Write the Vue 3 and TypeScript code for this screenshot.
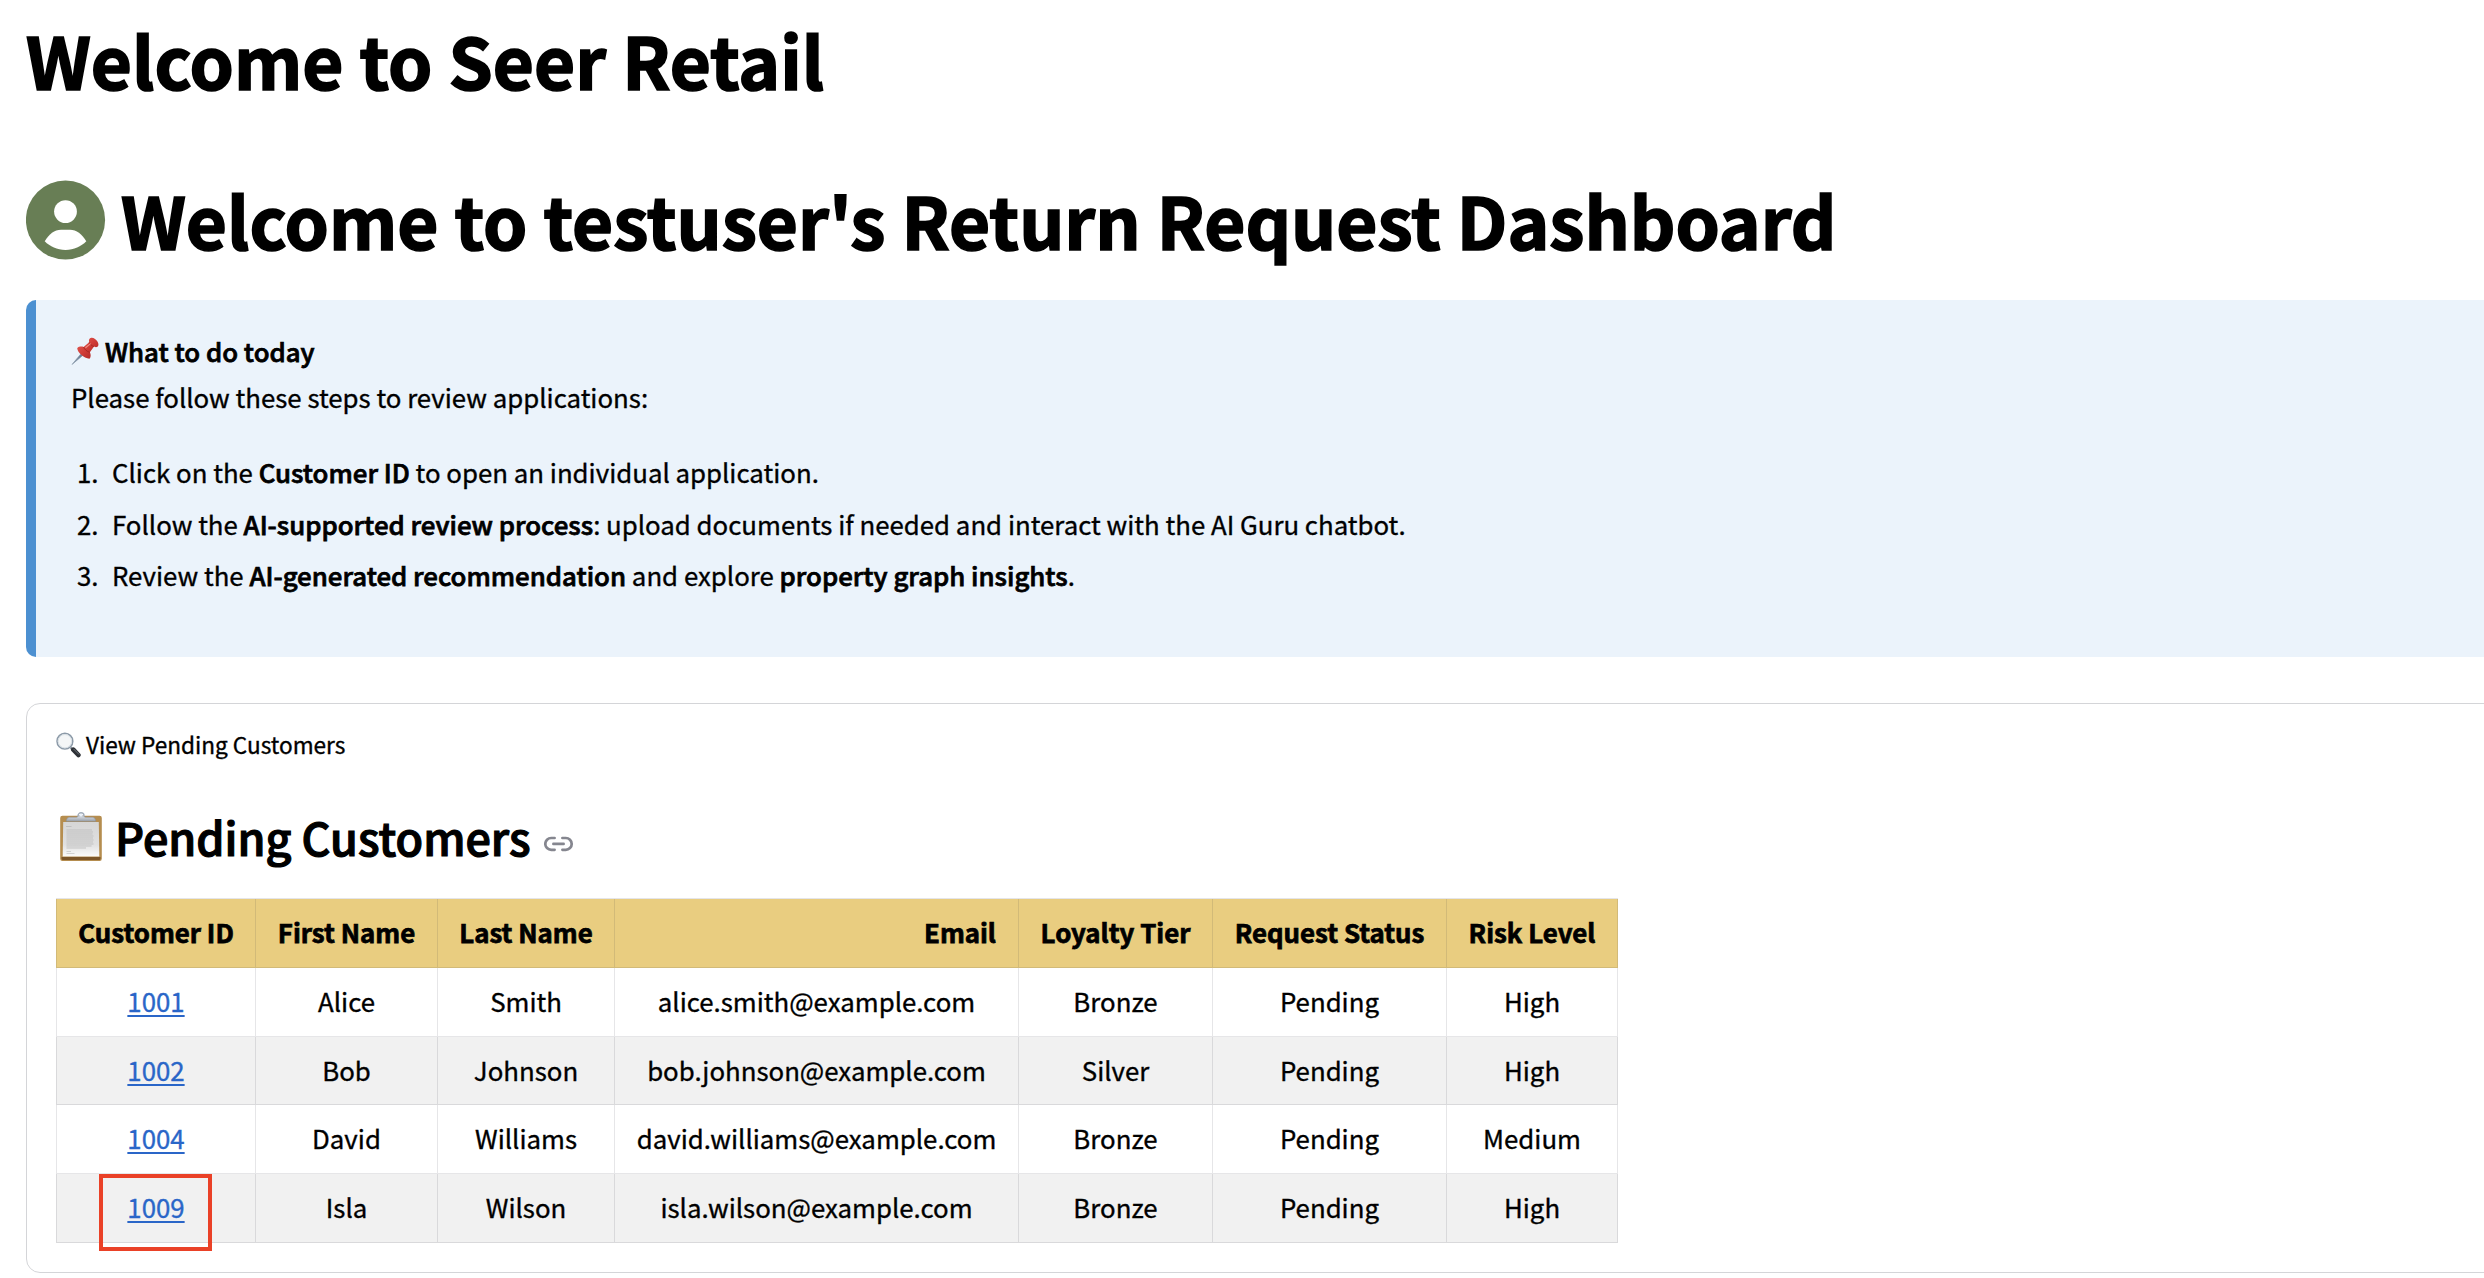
<script setup lang="ts">
interface Customer {
  id: number
  first: string
  last: string
  email: string
  tier: string
  status: string
  risk: string
  highlighted?: boolean
}

interface Part {
  text: string
  strong?: boolean
}

const columns = ['Customer ID', 'First Name', 'Last Name', 'Email', 'Loyalty Tier', 'Request Status', 'Risk Level']

const steps: Part[][] = [
  [{ text: 'Click on the ' }, { text: 'Customer ID', strong: true }, { text: ' to open an individual application.' }],
  [
    { text: 'Follow the ' },
    { text: 'AI-supported review process', strong: true },
    { text: ': upload documents if needed and interact with the AI Guru chatbot.' },
  ],
  [
    { text: 'Review the ' },
    { text: 'AI-generated recommendation', strong: true },
    { text: ' and explore ' },
    { text: 'property graph insights', strong: true },
    { text: '.' },
  ],
]

const customers: Customer[] = [
  { id: 1001, first: 'Alice', last: 'Smith', email: 'alice.smith@example.com', tier: 'Bronze', status: 'Pending', risk: 'High' },
  { id: 1002, first: 'Bob', last: 'Johnson', email: 'bob.johnson@example.com', tier: 'Silver', status: 'Pending', risk: 'High' },
  { id: 1004, first: 'David', last: 'Williams', email: 'david.williams@example.com', tier: 'Bronze', status: 'Pending', risk: 'Medium' },
  { id: 1009, first: 'Isla', last: 'Wilson', email: 'isla.wilson@example.com', tier: 'Bronze', status: 'Pending', risk: 'High', highlighted: true },
]
</script>

<template>
  <main class="page">
    <h1 class="title">Welcome to Seer Retail</h1>

    <div class="greeting">
      <svg class="avatar" viewBox="0 0 80 80" aria-hidden="true">
        <circle cx="39.5" cy="40" r="39.6" fill="#687e55" />
        <circle cx="39.5" cy="31.6" r="11.4" fill="#fff" />
        <path d="M18.700 61.200C23 54 28.500 49.700 35 49.700H44C50.500 49.700 56 54 60.300 61.200C55 66.500 48 69.900 39.500 69.900S24 66.500 18.700 61.200Z" fill="#fff" />
      </svg>
      <h1 class="title">Welcome to testuser's Return Request Dashboard</h1>
    </div>

    <section class="notice">
      <div class="notice-head">
        <svg class="pin" viewBox="0 0 28 28" aria-hidden="true">
          <defs>
            <linearGradient id="pin-body" x1="0" y1="0" x2="1" y2="1">
              <stop offset="0" stop-color="#e8625a" />
              <stop offset="0.5" stop-color="#cf3b36" />
              <stop offset="1" stop-color="#a3211f" />
            </linearGradient>
          </defs>
          <path d="M1 27.500L11.200 15.300L13.200 17.200Z" fill="#6f8299" stroke="#8595a6" stroke-width="0.600" />
          <path d="M6.200 11.200C7.800 9.500 10.500 9.300 12.600 10L18.200 5.300C17.500 3.200 18.300 1.200 20.300 0.800C22.500 0.500 25.200 2.300 26.600 4.700C27.900 7.100 27.700 9.300 26 10C25 10.300 24 10.100 23 9.500L18.900 15.300C20 17.700 20 20.300 18.500 21.800C15.500 21.600 12.500 20 10.200 17.800C8 15.800 6.500 13.600 6.200 11.200Z" fill="url(#pin-body)" />
          <path d="M18.200 5.300C18.800 7 20.800 9 23 9.500" fill="none" stroke="#a32623" stroke-width="0.900" />
          <path d="M12.600 10C13.400 12.300 16 14.700 18.900 15.300" fill="none" stroke="#a32623" stroke-width="0.900" />
          <path d="M14.800 10.500L19.300 6.900" stroke="#f08c83" stroke-width="1.200" stroke-linecap="round" />
        </svg>
        <strong>What to do today</strong>
      </div>
      <p class="lead">Please follow these steps to review applications:</p>
      <div class="steps">
        <div v-for="(step, i) in steps" :key="i" class="step">
          <span class="num">{{ i + 1 }}.</span>
          <p><template v-for="(part, j) in step" :key="j"><strong v-if="part.strong">{{ part.text }}</strong><template v-else>{{ part.text }}</template></template></p>
        </div>
      </div>
    </section>

    <section class="card">
      <div class="summary">
        <svg class="lens" viewBox="0 0 25 26" aria-hidden="true">
          <path d="M14.600 15.400L17 17.800" stroke="#8b939c" stroke-width="2.400" />
          <path d="M17.300 17.700L22.400 23" stroke="#2d3136" stroke-width="4.600" stroke-linecap="round" />
          <path d="M17.800 17.200L22.800 22.200" stroke="#6b7178" stroke-width="1" stroke-linecap="round" />
          <circle cx="8.900" cy="9.200" r="7.900" fill="#f4f6f7" stroke="#8c9aa8" stroke-width="1.500" />
          <circle cx="8.900" cy="9.200" r="6.700" fill="none" stroke="#d5dce2" stroke-width="0.900" />
        </svg>
        <span>View Pending Customers</span>
      </div>

      <div class="section-head">
        <svg class="clipboard" viewBox="0 0 42 50" aria-hidden="true">
          <defs>
            <linearGradient id="paper" x1="0" y1="0" x2="0" y2="1">
              <stop offset="0" stop-color="#d6d6d6" />
              <stop offset="0.650" stop-color="#e0e0e0" />
              <stop offset="1" stop-color="#fbfbfb" />
            </linearGradient>
            <linearGradient id="clip" x1="0" y1="0" x2="0" y2="1">
              <stop offset="0" stop-color="#dce1e8" />
              <stop offset="1" stop-color="#9aa1ab" />
            </linearGradient>
          </defs>
          <rect x="0.200" y="3.800" width="41.600" height="45.200" rx="2.200" fill="#b58d4f" />
          <path d="M1.500 45H40.500V46.500Q40.500 48 39 48H3Q1.500 48 1.500 46.500Z" fill="#7c5629" />
          <path d="M3.200 10H38.800L39.300 44.500H2.700Z" fill="url(#paper)" />
          <rect x="6" y="14" width="5.500" height="0.900" fill="#bdbdbd" />
          <g fill="none" stroke="#bababa" stroke-width="1">
            <path d="M6.500 18H32M6.500 20H33M6.500 22H32.500M6.500 24H33.500M6.500 26H33M6.500 28H33.500M6.500 30H33M6.500 32H33.500M6.500 34H31.500M6.500 36H26" stroke-opacity="0.800" />
            <path d="M6.500 39.500H11M6.500 41.500H14.500" stroke-opacity="0.600" />
          </g>
          <circle cx="21" cy="3.800" r="3" fill="none" stroke="#a4afbd" stroke-width="1.400" />
          <path d="M6.200 9.300Q6.200 5.500 9.500 5.200H16.500Q18 5.200 18.500 3.800H23.500Q24 5.200 25.500 5.200H32.500Q35.800 5.500 35.800 9.300Z" fill="url(#clip)" stroke="#858b94" stroke-width="0.500" />
          <circle cx="21" cy="3.200" r="1.300" fill="#e9f1fa" />
        </svg>
        <h3>Pending Customers</h3>
        <svg class="link-icon" viewBox="0 0 30 16" aria-hidden="true">
          <g fill="none" stroke="#85868f" stroke-width="2.700" stroke-linecap="round">
            <path d="M10.600 2H7.200A5.900 5.900 0 0 0 7.200 13.800H10.600" />
            <path d="M18.400 2H21.800A5.900 5.900 0 0 1 21.800 13.800H18.400" />
            <path d="M9.400 7.900H19.600" />
          </g>
        </svg>
      </div>

      <table class="customers">
        <colgroup>
          <col class="c-id" /><col class="c-first" /><col class="c-last" /><col class="c-email" /><col class="c-tier" /><col class="c-status" /><col class="c-risk" />
        </colgroup>
        <thead>
          <tr>
            <th v-for="name in columns" :key="name" :class="{ right: name === 'Email' }">{{ name }}</th>
          </tr>
        </thead>
        <tbody>
          <tr v-for="c in customers" :key="c.id">
            <td class="id-cell">
              <a href="#">{{ c.id }}</a>
              <span v-if="c.highlighted" class="marker"></span>
            </td>
            <td>{{ c.first }}</td>
            <td>{{ c.last }}</td>
            <td>{{ c.email }}</td>
            <td>{{ c.tier }}</td>
            <td>{{ c.status }}</td>
            <td>{{ c.risk }}</td>
          </tr>
        </tbody>
      </table>
    </section>
  </main>
</template>

<style>
html,
body {
  margin: 0;
  background: #fff;
}
</style>

<style scoped>
.page {
  box-sizing: border-box;
  width: 100%;
  height: 1278px;
  overflow: hidden;
  padding: 12px 0 0 26px;
  color: #000;
  font-family: "Noto Sans CJK SC", "Noto Sans", sans-serif;
  font-size: 25.8px;
  -webkit-text-stroke-width: 0.35px;
}
h1,
h3,
p {
  margin: 0;
}
strong {
  font-weight: 500;
  -webkit-text-stroke-width: 0.75px;
}
.title {
  font-size: 70.9px;
  font-weight: 700;
  line-height: 95px;
  white-space: nowrap;
  -webkit-text-stroke-width: 1.7px;
}
.greeting {
  display: flex;
  align-items: center;
  gap: 15px;
  margin-top: 65px;
}
.avatar {
  width: 80px;
  height: 80px;
  flex: none;
}
.notice {
  box-sizing: border-box;
  height: 357px;
  margin-top: 33px;
  margin-right: -40px;
  padding: 28px 34px 0;
  border-left: 10px solid #4c90d1;
  border-radius: 10px;
  background: #ebf3fb;
}
.notice-head {
  display: flex;
  align-items: center;
  line-height: 46px;
}
.pin {
  width: 28px;
  height: 28px;
  flex: none;
  margin: 0 6px 0 1px;
}
.lead {
  padding-left: 1px;
  line-height: 45px;
}
.steps {
  margin-top: 27px;
  padding-left: 7px;
}
.step {
  display: flex;
  line-height: 51.5px;
}
.num {
  width: 35px;
  flex: none;
}
.step p {
  white-space: pre;
}
.card {
  box-sizing: border-box;
  height: 570px;
  margin-top: 46px;
  margin-right: -40px;
  padding: 21px 29px 0;
  border: 1px solid #d4d5d8;
  border-radius: 14px;
}
.summary {
  display: flex;
  align-items: center;
  font-size: 22.6px;
  line-height: 40px;
}
.lens {
  width: 25px;
  height: 26px;
  flex: none;
  margin-right: 5px;
}
.section-head {
  display: flex;
  align-items: center;
  height: 60px;
  margin-top: 42px;
}
.clipboard {
  width: 42px;
  height: 50px;
  flex: none;
  margin: 0 13px 0 4px;
}
h3 {
  font-size: 44.9px;
  font-weight: 500;
  line-height: 60px;
  -webkit-text-stroke-width: 1.2px;
}
.link-icon {
  width: 30px;
  height: 16px;
  flex: none;
  margin: 13px 0 0 13px;
}
.customers {
  width: 1562px;
  margin-top: 31px;
  table-layout: fixed;
  border-collapse: separate;
  border-spacing: 0;
  border-top: 1px solid #e5e5e8;
}
.c-id { width: 200px; }
.c-first { width: 182px; }
.c-last { width: 177px; }
.c-email { width: 404px; }
.c-tier { width: 194px; }
.c-status { width: 234px; }
.c-risk { width: 171px; }
th,
td {
  box-sizing: border-box;
  height: 69px;
  padding: 0 21px 3px;
  border-right: 1px solid rgba(49, 51, 63, 0.12);
  border-bottom: 1px solid rgba(49, 51, 63, 0.12);
  line-height: 40px;
  text-align: center;
  vertical-align: middle;
  white-space: nowrap;
}
th:first-child,
td:first-child {
  border-left: 1px solid rgba(49, 51, 63, 0.12);
}
th {
  padding: 0 10px 3px;
  background: #e9cd80;
  font-weight: 700;
  -webkit-text-stroke-width: 0.75px;
}
th.right {
  padding-right: 22px;
  text-align: right;
}
tbody tr:nth-child(2) td {
  height: 68px;
  padding-bottom: 1px;
}
tbody tr:nth-child(even) td {
  background: #f1f1f1;
}
td a {
  color: #2a66c8;
  text-decoration: underline;
  text-decoration-thickness: 2px;
  text-underline-offset: 3px;
}
.id-cell {
  position: relative;
}
/* Red callout frame drawn over the highlighted customer's ID */
.marker {
  position: absolute;
  top: 0;
  left: 42px;
  box-sizing: border-box;
  width: 113px;
  height: 77px;
  border: 4px solid #ea4127;
}
</style>
